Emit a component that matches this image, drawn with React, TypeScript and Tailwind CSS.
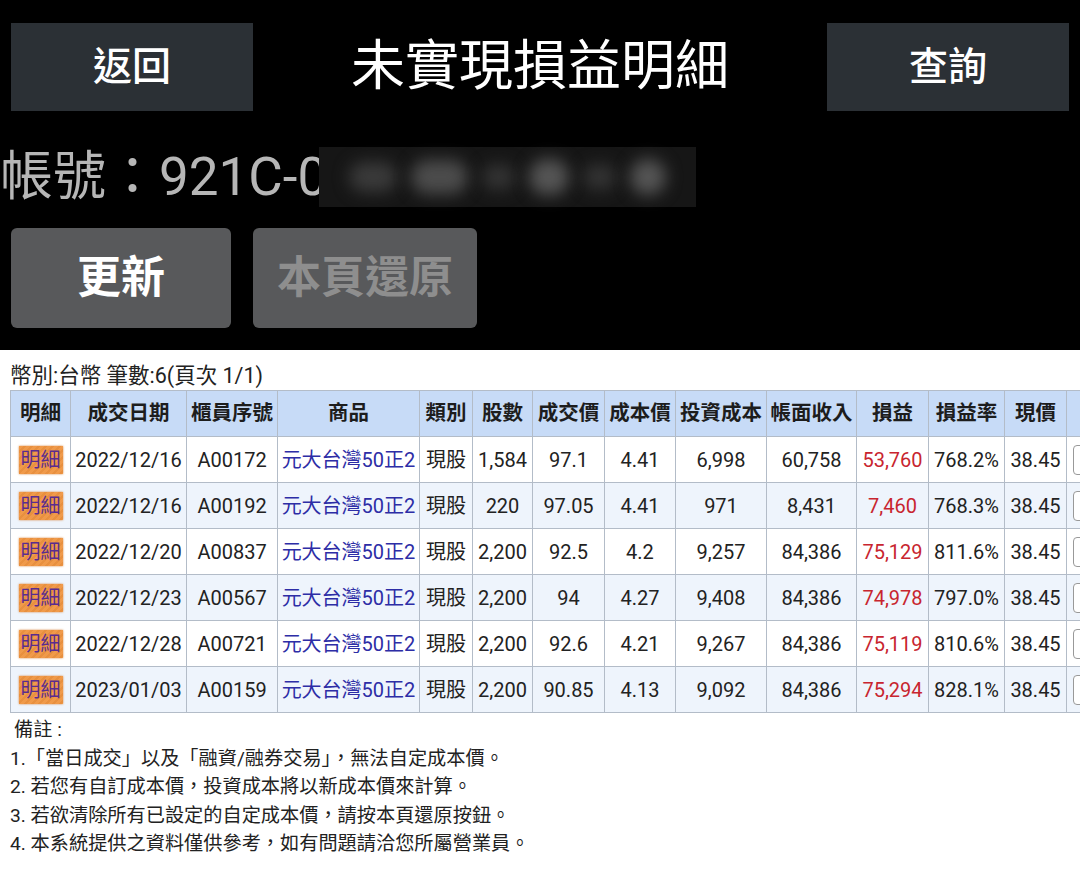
import React from 'react';

type Row = {
  date: string;
  teller: string;
  qty: string;
  price: string;
  cost: string;
  invest: string;
  book: string;
  pl: string;
  rate: string;
  now: string;
};

const rows: Row[] = [
  { date: '2022/12/16', teller: 'A00172', qty: '1,584', price: '97.1', cost: '4.41', invest: '6,998', book: '60,758', pl: '53,760', rate: '768.2%', now: '38.45' },
  { date: '2022/12/16', teller: 'A00192', qty: '220', price: '97.05', cost: '4.41', invest: '971', book: '8,431', pl: '7,460', rate: '768.3%', now: '38.45' },
  { date: '2022/12/20', teller: 'A00837', qty: '2,200', price: '92.5', cost: '4.2', invest: '9,257', book: '84,386', pl: '75,129', rate: '811.6%', now: '38.45' },
  { date: '2022/12/23', teller: 'A00567', qty: '2,200', price: '94', cost: '4.27', invest: '9,408', book: '84,386', pl: '74,978', rate: '797.0%', now: '38.45' },
  { date: '2022/12/28', teller: 'A00721', qty: '2,200', price: '92.6', cost: '4.21', invest: '9,267', book: '84,386', pl: '75,119', rate: '810.6%', now: '38.45' },
  { date: '2023/01/03', teller: 'A00159', qty: '2,200', price: '90.85', cost: '4.13', invest: '9,092', book: '84,386', pl: '75,294', rate: '828.1%', now: '38.45' },
];

const headers = ['明細', '成交日期', '櫃員序號', '商品', '類別', '股數', '成交價', '成本價', '投資成本', '帳面收入', '損益', '損益率', '現價', ''];
const widths = [60, 116, 91, 142, 53, 60, 72, 71, 91, 90, 72, 76, 62, 100];

const notes = [
  '1.「當日成交」以及「融資/融券交易」，無法自定成本價。',
  '2. 若您有自訂成本價，投資成本將以新成本價來計算。',
  '3. 若欲清除所有已設定的自定成本價，請按本頁還原按鈕。',
  '4. 本系統提供之資料僅供參考，如有問題請洽您所屬營業員。',
];

const font = { fontFamily: '"Roboto", "Noto Sans CJK TC", sans-serif' };

const App: React.FC = () => {
  const cell = 'border border-[#b3bcc8] text-center p-0 whitespace-nowrap';

  return (
    <div className="w-[1080px] h-[888px] overflow-hidden bg-white" style={font}>
      {/* Dark header block */}
      <div className="bg-black h-[350px] pt-[23px]">
        <div className="flex items-center justify-between px-[11px]">
          <button className="w-[242px] h-[88px] bg-[#2b3035] text-white text-[39px] font-medium">
            返回
          </button>
          <h1 className="text-white text-[54px] leading-none">未實現損益明細</h1>
          <button className="w-[242px] h-[88px] bg-[#2b3035] text-white text-[39px] font-medium">
            查詢
          </button>
        </div>

        {/* Account */}
        <div className="flex items-center h-[60px] mt-[36px] text-[#b6b6b6] text-[53px] leading-[60px]">
          <span>帳號：921C-</span>
          <span className="inline-block w-[21px] overflow-hidden">0</span>
          <div className="flex items-center gap-[14px] w-[377px] h-[60px] bg-[#161616] px-[30px]">
            <span className="w-[60px] h-[30px] rounded-full bg-[#3a3a3a] blur-[8px]" />
            <span className="w-[70px] h-[34px] rounded-full bg-[#4c4c4c] blur-[8px]" />
            <span className="w-[40px] h-[26px] rounded-full bg-[#333] blur-[8px]" />
            <span className="w-[50px] h-[36px] rounded-full bg-[#555] blur-[8px]" />
            <span className="w-[40px] h-[26px] rounded-full bg-[#333] blur-[8px]" />
            <span className="w-[44px] h-[36px] rounded-full bg-[#555] blur-[8px]" />
          </div>
        </div>

        {/* Actions */}
        <div className="flex gap-[22px] px-[11px] mt-[21px]">
          <button className="w-[220px] h-[100px] rounded-[6px] bg-[#58595b] text-white text-[44px] font-bold">
            更新
          </button>
          <button className="w-[224px] h-[100px] rounded-[6px] bg-[#58595b] text-[#8e8e8e] text-[44px] font-bold">
            本頁還原
          </button>
        </div>
      </div>

      {/* Content */}
      <div className="pl-[10px] pt-[12px] text-[#222]">
        <p className="text-[21.5px] leading-[28px]">幣別:台幣 筆數:6(頁次 1/1)</p>

        <table className="table-fixed border-collapse w-[1156px] text-[20px]">
          <colgroup>
            {widths.map((w, i) => (
              <col key={i} style={{ width: w }} />
            ))}
          </colgroup>
          <thead>
            <tr className="h-[46px] bg-[#c7dbf7]">
              {headers.map((h, i) => (
                <th key={i} className={`${cell} font-bold text-[20.5px] text-[#1d1d1d]`}>
                  {h}
                </th>
              ))}
            </tr>
          </thead>
          <tbody>
            {rows.map((r, i) => (
              <tr key={i} className={`h-[46px] ${i % 2 === 1 ? 'bg-[#eef4fc]' : 'bg-white'}`}>
                <td className={cell}>
                  <span className="inline-block px-[2px] h-[28px] leading-[28px] text-[#5a2c8f] bg-[repeating-linear-gradient(135deg,#f09a4a_0px,#f09a4a_3px,#e8903f_3px,#e8903f_5px)] shadow-[0_0_2px_#d88a44]">
                    明細
                  </span>
                </td>
                <td className={cell}>{r.date}</td>
                <td className={cell}>{r.teller}</td>
                <td className={`${cell} text-[#2d2da6]`}>元大台灣50正2</td>
                <td className={cell}>現股</td>
                <td className={cell}>{r.qty}</td>
                <td className={cell}>{r.price}</td>
                <td className={cell}>{r.cost}</td>
                <td className={cell}>{r.invest}</td>
                <td className={cell}>{r.book}</td>
                <td className={`${cell} text-[#c8252f]`}>{r.pl}</td>
                <td className={cell}>{r.rate}</td>
                <td className={cell}>{r.now}</td>
                <td className={`${cell} text-left pl-[6px]`}>
                  <div className="h-[30px] w-[90px] rounded-[4px] border border-[#999] bg-white" />
                </td>
              </tr>
            ))}
          </tbody>
        </table>

        <div className="text-[19.2px] leading-[28.5px] pt-[3px]">
          <p className="pl-[4px]">備註 :</p>
          {notes.map((n, i) => (
            <p key={i}>{n}</p>
          ))}
        </div>
      </div>
    </div>
  );
};

export default App;
